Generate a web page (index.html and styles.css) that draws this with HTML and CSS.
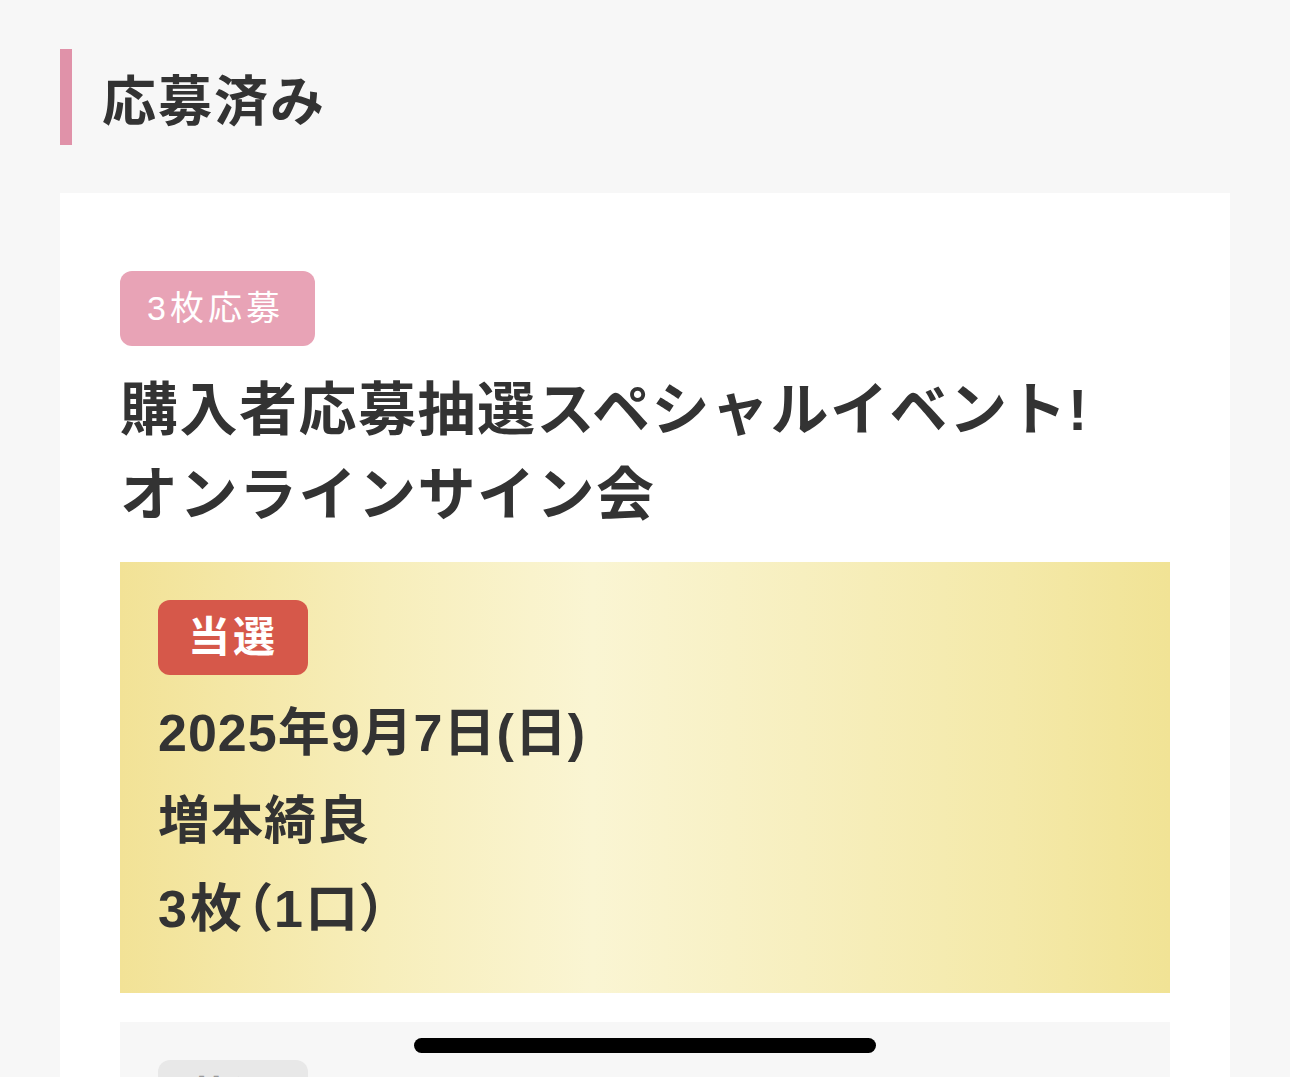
FILE: index.html
```html
<!DOCTYPE html>
<html lang="ja">
<head>
    <meta charset="UTF-8">
    <title>応募済み</title>
    <link rel="stylesheet" href="styles.css">
</head>
<body>

    <h1 class="section-title">応募済み</h1>

    <div class="entry-card">
        <div class="entry">
            <span class="count-tag">3枚応募</span>
            <h2 class="event-title">購入者応募抽選スペシャルイベント!<br>オンラインサイン会</h2>

            <div class="result result-won">
                <span class="result-tag">当選</span>
                <p class="result-line">2025年9月7日(日)</p>
                <p class="result-line">増本綺良</p>
                <p class="result-line result-count">3枚（1口）</p>
            </div>

            <div class="result result-lost">
                <span class="result-tag">落選</span>
                <p class="result-line">2025年9月7日(日)</p>
            </div>
        </div>
    </div>

    <div class="home-bar"></div>

</body>
</html>
```

FILE: styles.css
```css
body {
    margin: 0;
    padding: 49px 60px 0;
    background-color: #f7f7f7;
    color: #333333;
    font-family: "Liberation Sans", "Noto Sans CJK JP", sans-serif;
    overflow: hidden;
}

/* heading with the pink bar on the left */
.section-title {
    margin: 0;
    height: 96px;
    display: flex;
    align-items: center;
    padding-left: 30px;
    border-left: 12px solid #e092a9;
    font-size: 54px;
    font-weight: bold;
    letter-spacing: 2px;
}

.entry-card {
    margin-top: 48px;
    background-color: #ffffff;
    padding: 78px 60px 60px;
    min-height: 1000px;
}

.count-tag {
    display: inline-block;
    background-color: #e8a3b6;
    color: #ffffff;
    border-radius: 12px;
    height: 75px;
    line-height: 75px;
    padding: 0 31px 0 27px;
    font-size: 34px;
    letter-spacing: 4px;
}

.event-title {
    margin: 21px 0 25px;
    font-size: 58px;
    line-height: 85px;
    font-weight: bold;
    letter-spacing: 1.5px;
}

.result {
    padding: 38px 38px 40px;
}

.result-won {
    background: linear-gradient(90deg, #f2e296 0%, #f7eebb 25%, #faf5d3 45%, #f7efbf 65%, #f4e9a9 85%, #f1e395 100%);
}

.result-lost {
    margin-top: 29px;
    background-color: #f7f7f7;
}

.result-tag {
    display: inline-block;
    background-color: #d6584a;
    color: #ffffff;
    border-radius: 12px;
    height: 75px;
    line-height: 75px;
    padding: 0 30px;
    font-size: 42px;
    font-weight: bold;
    letter-spacing: 3px;
    margin-bottom: 14px;
}

.result-lost .result-tag {
    background-color: #e8e8e8;
    color: #999999;
}

.result-line {
    margin: 0;
    font-size: 52px;
    line-height: 88px;
    font-weight: bold;
    letter-spacing: 1px;
}

/* proportional full-width brackets */
.result-count {
    font-feature-settings: "palt";
    letter-spacing: 3px;
}

/* iOS home indicator over the page */
.home-bar {
    position: fixed;
    left: 50%;
    bottom: 24px;
    width: 462px;
    height: 15px;
    margin-left: -231px;
    background-color: #000000;
    border-radius: 8px;
}
```
